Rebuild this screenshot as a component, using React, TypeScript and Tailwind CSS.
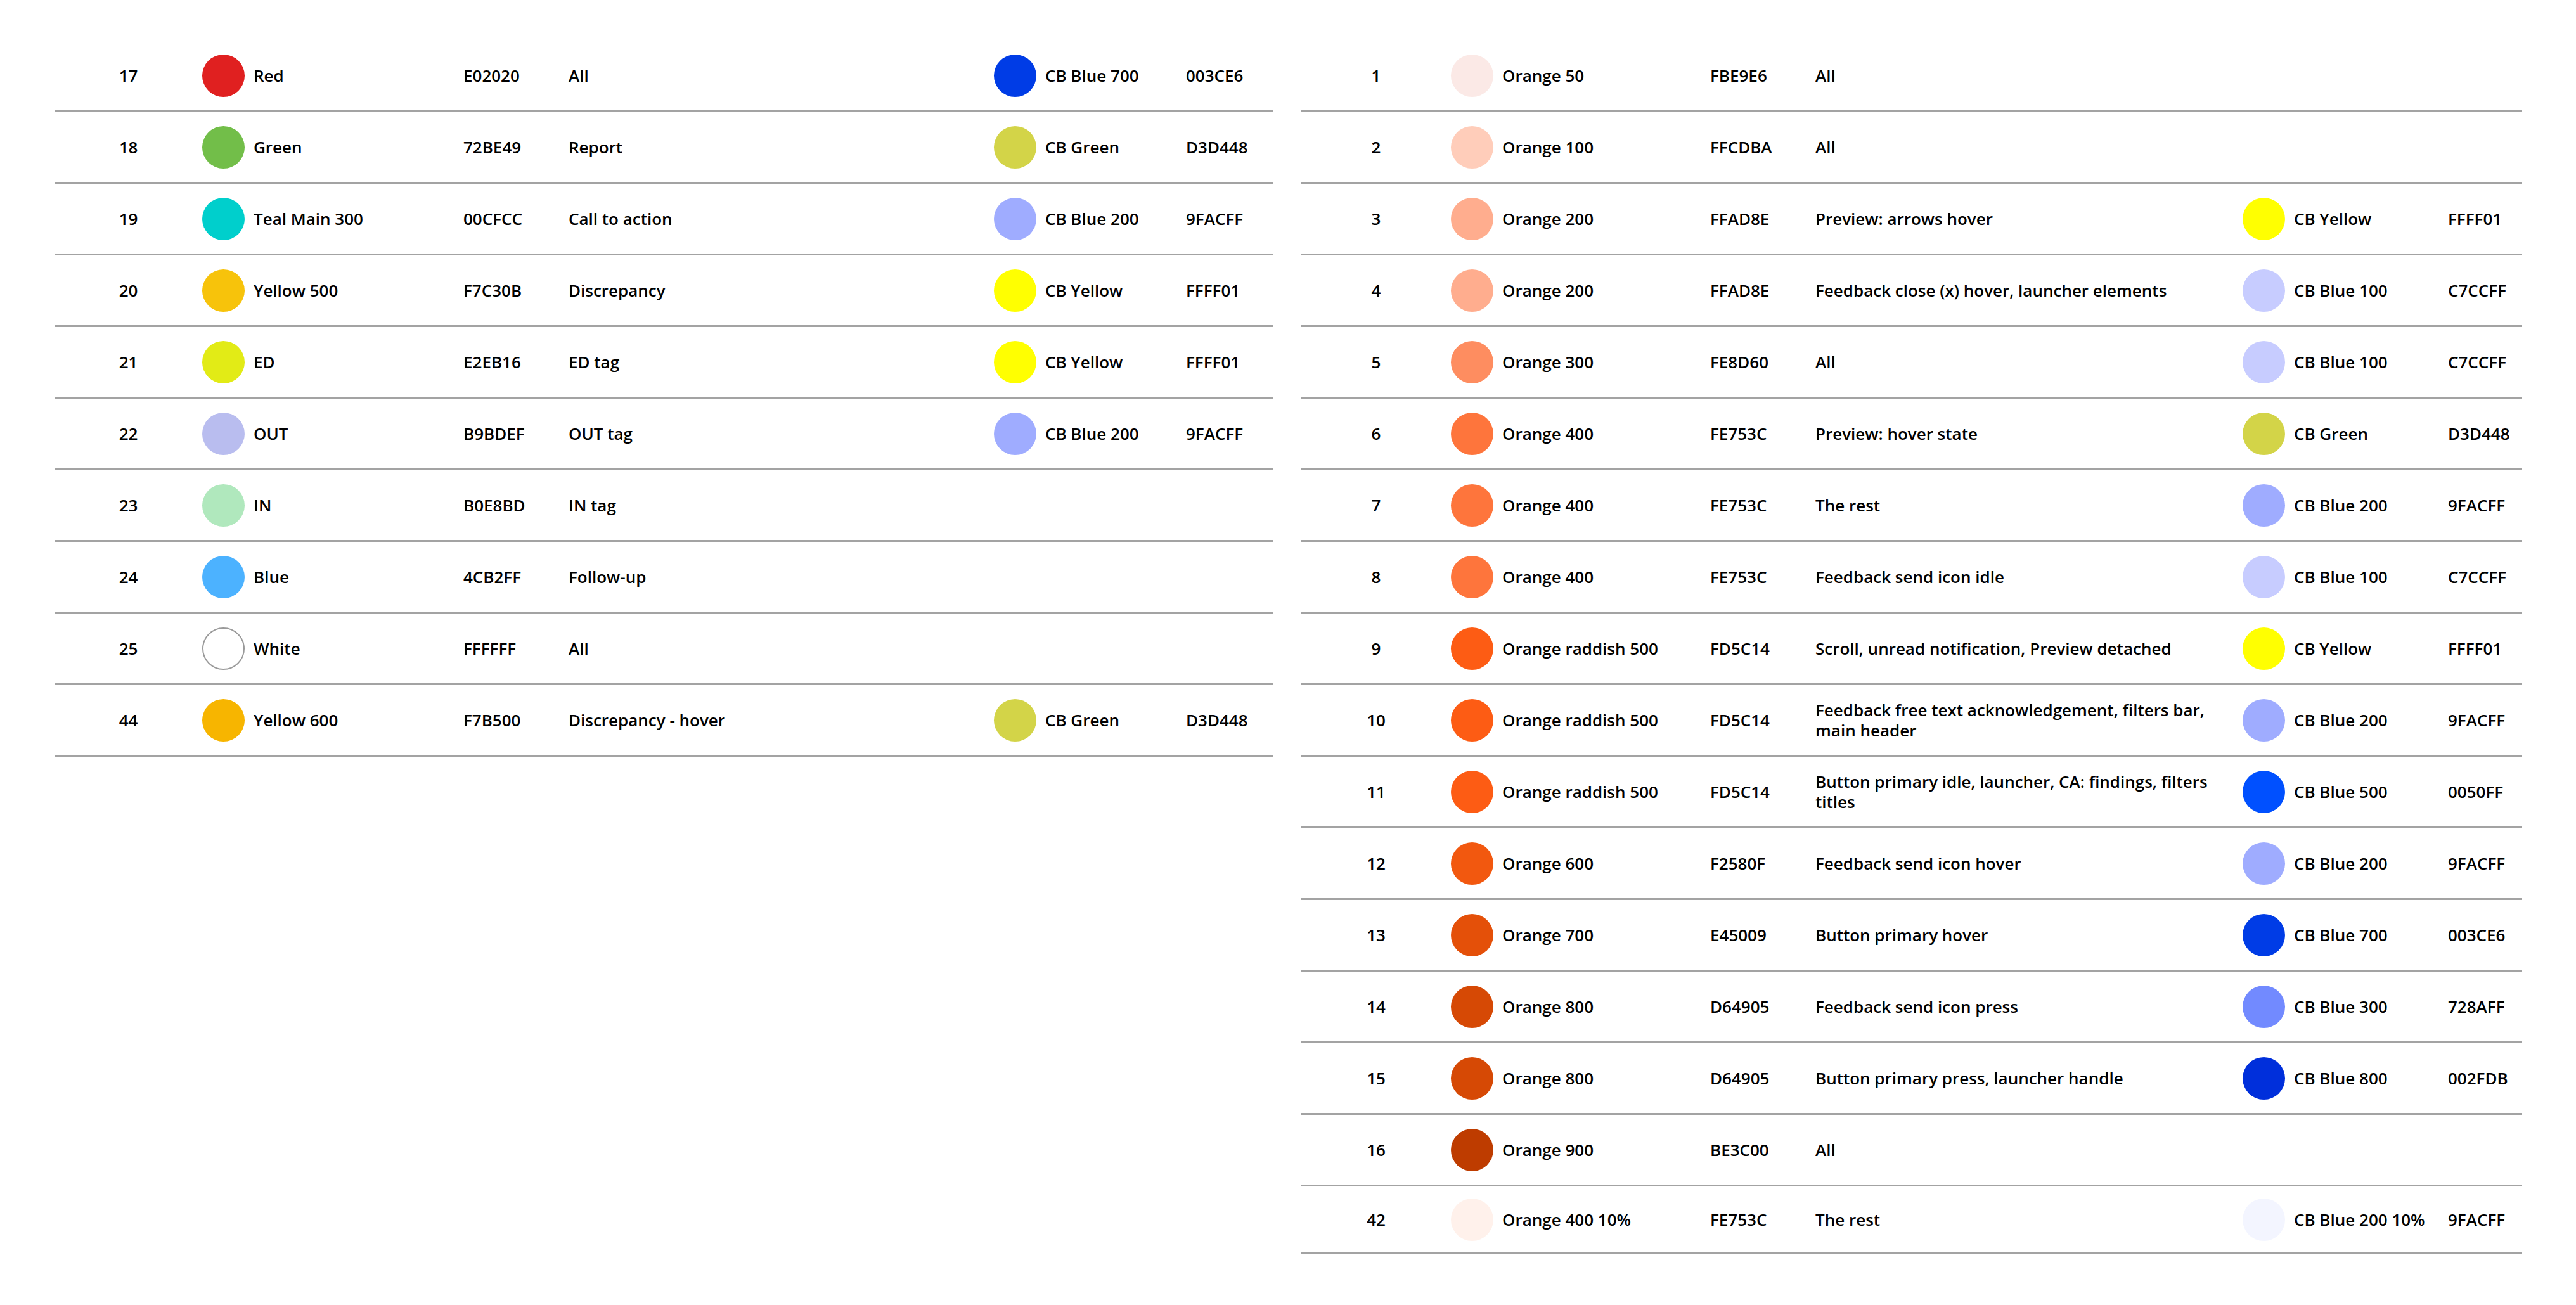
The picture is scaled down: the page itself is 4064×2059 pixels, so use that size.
type Row = { n: string; c: string; name: string; hex: string; use: string; c2?: string; name2?: string; hex2?: string; op?: boolean; border?: boolean; h?: string };

const left: Row[] = [
  { n: "17", c: "#E02020", name: "Red", hex: "E02020", use: "All", c2: "#003CE6", name2: "CB Blue 700", hex2: "003CE6" },
  { n: "18", c: "#72BE49", name: "Green", hex: "72BE49", use: "Report", c2: "#D3D448", name2: "CB Green", hex2: "D3D448" },
  { n: "19", c: "#00CFCC", name: "Teal Main 300", hex: "00CFCC", use: "Call to action", c2: "#9FACFF", name2: "CB Blue 200", hex2: "9FACFF" },
  { n: "20", c: "#F7C30B", name: "Yellow 500", hex: "F7C30B", use: "Discrepancy", c2: "#FFFF01", name2: "CB Yellow", hex2: "FFFF01" },
  { n: "21", c: "#E2EB16", name: "ED", hex: "E2EB16", use: "ED tag", c2: "#FFFF01", name2: "CB Yellow", hex2: "FFFF01" },
  { n: "22", c: "#B9BDEF", name: "OUT", hex: "B9BDEF", use: "OUT tag", c2: "#9FACFF", name2: "CB Blue 200", hex2: "9FACFF" },
  { n: "23", c: "#B0E8BD", name: "IN", hex: "B0E8BD", use: "IN tag" },
  { n: "24", c: "#4CB2FF", name: "Blue", hex: "4CB2FF", use: "Follow-up" },
  { n: "25", c: "#FFFFFF", name: "White", hex: "FFFFFF", use: "All", border: true },
  { n: "44", c: "#F7B500", name: "Yellow 600", hex: "F7B500", use: "Discrepancy - hover", c2: "#D3D448", name2: "CB Green", hex2: "D3D448" },
];

const right: Row[] = [
  { n: "1", c: "#FBE9E6", name: "Orange 50", hex: "FBE9E6", use: "All" },
  { n: "2", c: "#FFCDBA", name: "Orange 100", hex: "FFCDBA", use: "All" },
  { n: "3", c: "#FFAD8E", name: "Orange 200", hex: "FFAD8E", use: "Preview: arrows hover", c2: "#FFFF01", name2: "CB Yellow", hex2: "FFFF01" },
  { n: "4", c: "#FFAD8E", name: "Orange 200", hex: "FFAD8E", use: "Feedback close (x) hover, launcher elements", c2: "#C7CCFF", name2: "CB Blue 100", hex2: "C7CCFF" },
  { n: "5", c: "#FE8D60", name: "Orange 300", hex: "FE8D60", use: "All", c2: "#C7CCFF", name2: "CB Blue 100", hex2: "C7CCFF" },
  { n: "6", c: "#FE753C", name: "Orange 400", hex: "FE753C", use: "Preview: hover state", c2: "#D3D448", name2: "CB Green", hex2: "D3D448" },
  { n: "7", c: "#FE753C", name: "Orange 400", hex: "FE753C", use: "The rest", c2: "#9FACFF", name2: "CB Blue 200", hex2: "9FACFF" },
  { n: "8", c: "#FE753C", name: "Orange 400", hex: "FE753C", use: "Feedback send icon idle", c2: "#C7CCFF", name2: "CB Blue 100", hex2: "C7CCFF" },
  { n: "9", c: "#FD5C14", name: "Orange raddish 500", hex: "FD5C14", use: "Scroll, unread notification, Preview detached", c2: "#FFFF01", name2: "CB Yellow", hex2: "FFFF01" },
  { n: "10", c: "#FD5C14", name: "Orange raddish 500", hex: "FD5C14", use: "Feedback free text acknowledgement, filters bar, main header", c2: "#9FACFF", name2: "CB Blue 200", hex2: "9FACFF" },
  { n: "11", c: "#FD5C14", name: "Orange raddish 500", hex: "FD5C14", use: "Button primary idle, launcher, CA: findings, filters titles", c2: "#0050FF", name2: "CB Blue 500", hex2: "0050FF" },
  { n: "12", c: "#F2580F", name: "Orange 600", hex: "F2580F", use: "Feedback send icon hover", c2: "#9FACFF", name2: "CB Blue 200", hex2: "9FACFF" },
  { n: "13", c: "#E45009", name: "Orange 700", hex: "E45009", use: "Button primary hover", c2: "#003CE6", name2: "CB Blue 700", hex2: "003CE6" },
  { n: "14", c: "#D64905", name: "Orange 800", hex: "D64905", use: "Feedback send icon press", c2: "#728AFF", name2: "CB Blue 300", hex2: "728AFF" },
  { n: "15", c: "#D64905", name: "Orange 800", hex: "D64905", use: "Button primary press, launcher handle", c2: "#002FDB", name2: "CB Blue 800", hex2: "002FDB" },
  { n: "16", c: "#BE3C00", name: "Orange 900", hex: "BE3C00", use: "All" },
  { n: "42", c: "rgba(254,117,60,0.1)", name: "Orange 400 10%", hex: "FE753C", use: "The rest", c2: "rgba(159,172,255,0.12)", name2: "CB Blue 200 10%", hex2: "9FACFF", h: "h-[107px]" },
];

function Dot({ c, border }: { c: string; border?: boolean }) {
  return <div className={"w-[67px] h-[67px] rounded-full " + (border ? "border-2 border-[#9a9a9a]" : "")} style={{ backgroundColor: c }} />;
}

function Table({ rows, cols, w }: { rows: Row[]; cols: string; w: string }) {
  return (
    <div className={"flex flex-col " + w}>
      {rows.map((r, i) => (
        <div key={i} className={"grid items-center border-b-[3px] border-[#a3a3a3] " + cols + " " + (r.h ?? "h-[113px]")}>
          <div className="text-center">{r.n}</div>
          <Dot c={r.c} border={r.border} />
          <div className="pl-[14px]">{r.name}</div>
          <div>{r.hex}</div>
          <div className="pr-[40px] leading-[32px]">{r.use}</div>
          <div>{r.c2 ? <Dot c={r.c2} /> : null}</div>
          <div className="pl-[14px]">{r.name2 ?? ""}</div>
          <div>{r.hex2 ?? ""}</div>
        </div>
      ))}
    </div>
  );
}

export default function App() {
  return (
    <div className="w-[4064px] h-[2059px] bg-white text-black text-[26px] font-semibold pt-[64px] flex items-start" style={{ fontFamily: '"Open Sans", sans-serif' }}>
      <div className="ml-[86px]">
        <Table rows={left} w="w-[1923px]" cols="grid-cols-[233px_67px_345px_166px_671px_67px_236px_1fr]" />
      </div>
      <div className="ml-[44px]">
        <Table rows={right} w="w-[1926px]" cols="grid-cols-[236px_67px_342px_166px_674px_67px_257px_1fr]" />
      </div>
    </div>
  );
}
